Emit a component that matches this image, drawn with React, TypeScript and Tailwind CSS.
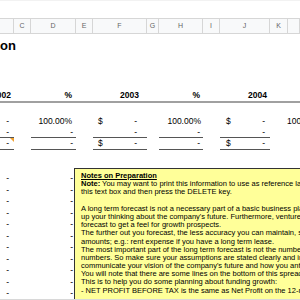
import type { ReactNode } from "react";

const colonnes = ["", "C", "D", "E", "F", "G", "H", "I", "J", "K", ""];
const grille =
  "grid grid-cols-[14px_17px_45px_17px_54px_12px_44px_17px_50px_18px_1fr]";

const lignesNote: ReactNode[] = [
  <span className="font-bold underline">Notes on Preparation</span>,
  <>
    <span className="font-bold">Note:</span> You may want to print this
    information to use as reference later. To delete
  </>,
  "this text box and then press the DELETE key.",
  "",
  "A long term forecast is not a necessary part of a basic business plan. However, it's a great tool to open",
  "up your thinking about the company's future. Furthermore, venture capitalists will want to see a long term",
  "forecast to get a feel for growth prospects.",
  "The further out you forecast, the less accuracy you can maintain, so round numbers",
  "amounts; e.g.: rent expense if you have a long term lease.",
  "The most important part of the long term forecast is not the numbers themselves",
  "numbers. So make sure your assumptions are stated clearly and in detail",
  "communicate your vision of the company's future and how you anticipate",
  "You will note that there are some lines on the bottom of this spreadsheet",
  "This is to help you do some planning about funding growth:",
  "- NET PROFIT BEFORE TAX is the same as Net Profit on the 12-month",
];

function Tiret({ className = "" }: { className?: string }) {
  return <div className={`text-right ${className}`}>-</div>;
}

function Montant({
  dollar,
  souligne,
  pl,
  pr,
}: {
  dollar?: boolean;
  souligne?: boolean;
  pl: string;
  pr: string;
}) {
  return (
    <div
      className={`flex items-center justify-between ${pl} ${pr} ${
        souligne ? "border-b border-[#555]" : ""
      }`}
    >
      <span>{dollar ? "$" : ""}</span>
      <span>-</span>
    </div>
  );
}

function LigneVide() {
  return (
    <div className={`${grille} h-[11.5px] items-center`}>
      <Tiret className="pr-[5px]" />
      <div />
      <Tiret className="pr-[3px]" />
    </div>
  );
}

export default function App() {
  return (
    <div className="relative flex h-[300px] w-[300px] flex-col overflow-hidden bg-white font-['Liberation_Sans',Arial,sans-serif] text-black">
      <div className="h-[18px] shrink-0 border-t border-[#f2f2f2]" />

      <div
        className={`${grille} h-[16px] shrink-0 border-y border-[#d6d6d6] bg-[#f8f9fa] text-[7px] text-[#666]`}
      >
        {colonnes.map((lettre, i) => (
          <div
            key={i}
            className="flex items-center justify-center border-r border-[#d6d6d6]"
          >
            {lettre}
          </div>
        ))}
      </div>

      <div className="flex-1 text-[8.5px] leading-none">
        <div className="flex h-[22px] items-center text-[13px] font-bold">
          on
        </div>

        <div className="h-[33px]" />

        <div
          className={`${grille} h-[14px] items-center border-b-2 border-[#a0a0a0] font-bold`}
        >
          <div className="whitespace-nowrap pr-[3px] text-right [direction:rtl]">
            2002
          </div>
          <div />
          <div className="pr-[4px] text-right">%</div>
          <div />
          <div className="pr-[8px] text-right">2003</div>
          <div />
          <div className="pr-[3px] text-right">%</div>
          <div />
          <div className="pr-[3px] text-right">2004</div>
        </div>

        <div className="h-[12.25px]" />

        <div className={`${grille} h-[11.5px] items-center`}>
          <Tiret className="pr-[5px]" />
          <div />
          <div className="pr-[4px] text-right">100.00%</div>
          <div />
          <Montant dollar pl="pl-[5px]" pr="pr-[10px]" />
          <div />
          <div className="pr-[2px] text-right">100.00%</div>
          <div />
          <Montant dollar pl="pl-[6px]" pr="pr-[5px]" />
          <div />
          <div className="-ml-[1px] whitespace-nowrap">100.00%</div>
        </div>

        <div className={`${grille} h-[11.5px]`}>
          <div className="flex items-center justify-end border-b border-[#555] pr-[5px]">
            -
          </div>
          <div />
          <div className="flex items-center justify-end border-b border-[#555] pr-[3px]">
            -
          </div>
          <div />
          <Montant souligne pl="pl-[5px]" pr="pr-[10px]" />
          <div />
          <div className="flex items-center justify-end border-b border-[#555] pr-[3px]">
            -
          </div>
          <div />
          <Montant souligne pl="pl-[6px]" pr="pr-[5px]" />
        </div>

        <div className={`${grille} h-[11.5px]`}>
          <div className="relative flex items-center justify-end border-b border-[#555] pr-[5px]">
            -
            <span className="absolute right-0 top-0 h-0 w-0 border-l-[4px] border-t-[4px] border-l-transparent border-t-[#f0a030]" />
          </div>
          <div />
          <div className="flex items-center justify-end border-b border-[#555] pr-[3px]">
            -
          </div>
          <div />
          <Montant dollar souligne pl="pl-[5px]" pr="pr-[10px]" />
          <div />
          <div className="flex items-center justify-end border-b border-[#555] pr-[3px]">
            -
          </div>
          <div />
          <Montant dollar souligne pl="pl-[6px]" pr="pr-[5px]" />
        </div>

        <div className="h-[23px]" />

        {Array.from({ length: 11 }).map((_, i) => (
          <LigneVide key={i} />
        ))}
      </div>

      <div className="absolute left-[74px] top-[168px] h-[140px] w-[260px] border border-[#333] bg-[#ffff99] pl-[6px] pt-[3px] text-[7.5px] leading-[8.2px] text-black">
        {lignesNote.map((ligne, i) => (
          <div key={i} className="h-[8.2px] whitespace-nowrap">
            {ligne}
          </div>
        ))}
      </div>

      <div className="relative z-10 h-[3px] shrink-0 border-t border-[#d8d8d8] bg-[#ececec]" />
    </div>
  );
}
